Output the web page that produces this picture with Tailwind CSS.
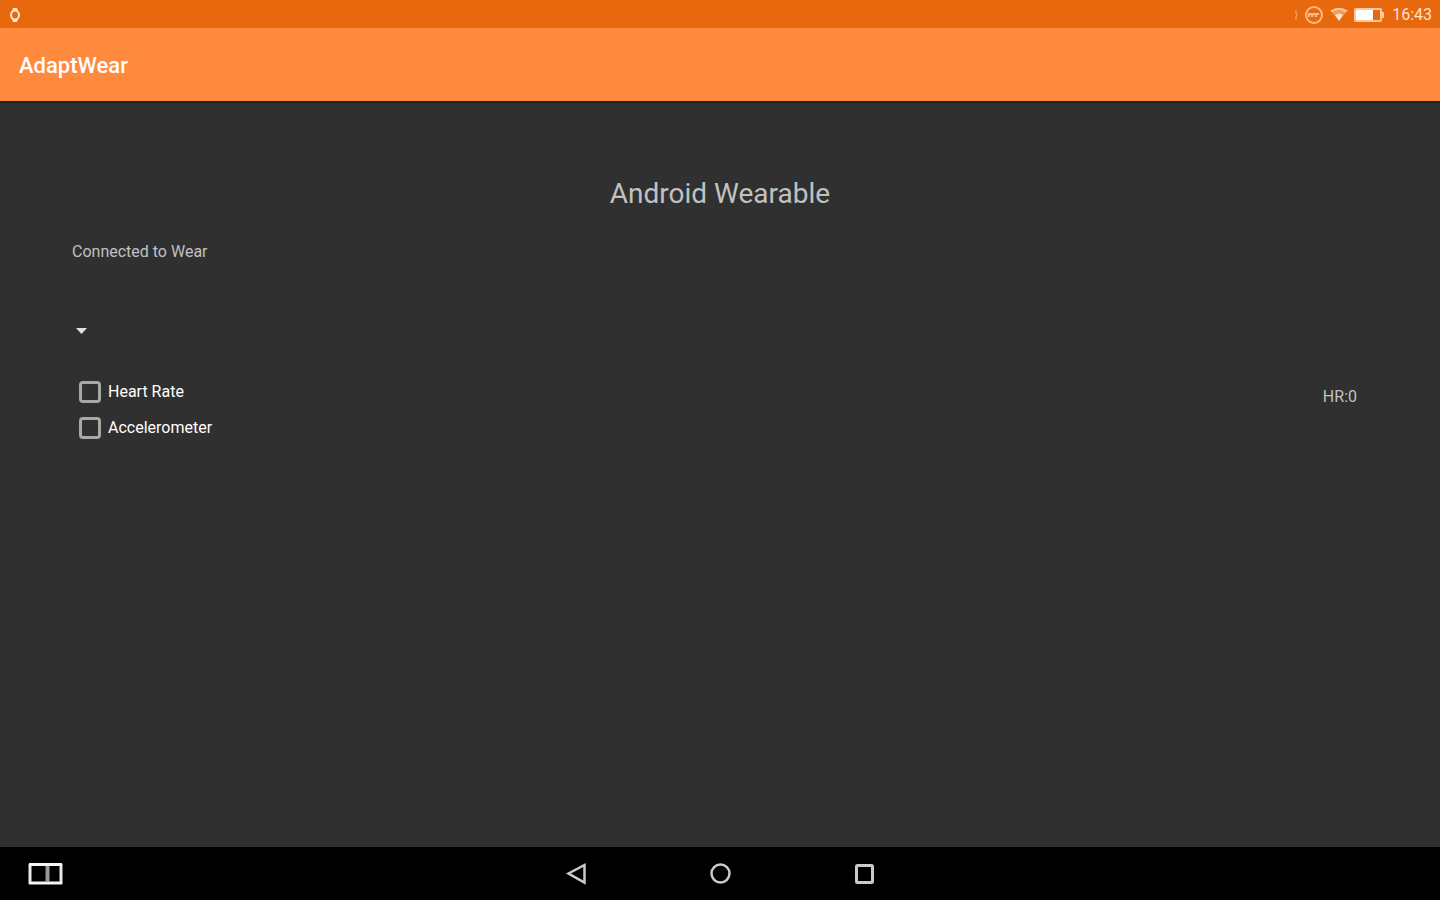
<!DOCTYPE html>
<html lang="en">
<head>
<meta charset="utf-8">
<meta name="viewport" content="width=device-width, initial-scale=1">
<title>AdaptWear</title>
<script src="https://cdn.jsdelivr.net/npm/@tailwindcss/browser@4"></script>
</head>
<body class="flex min-h-screen flex-col bg-[#303030] font-['Roboto',sans-serif] text-[#c1c1c1]">
  <!-- Status bar -->
  <div class="flex h-7 shrink-0 items-center justify-between bg-[#e8680e] pt-[2px] pr-2 pl-2 text-[#ffe3cc]">
    <svg class="h-4 w-3.5" viewBox="0 0 14 16" fill="none" aria-hidden="true">
      <path d="M5 1h4l1 3H4zM4 12h6l-1 3H5z" fill="currentColor"/>
      <ellipse cx="7" cy="8" rx="4" ry="4.500" stroke="currentColor" stroke-width="2"/>
    </svg>
    <div class="flex items-center">
      <svg class="mr-1.5 h-4 w-1" viewBox="0 0 4 16" fill="none" stroke="#f39a5c" stroke-width="1.5" aria-hidden="true"><path d="M2 3v3l1 2-1 2v3"/></svg>
      <svg class="mr-1.5 h-5 w-5" viewBox="0 0 20 20" fill="none" stroke="#ffb988" stroke-width="2" aria-hidden="true">
        <circle cx="10" cy="10" r="8"/>
        <path d="M5 12V9h3v3M8.500 11.500V9H12v2M12 12V9h3"/>
      </svg>
      <svg class="mr-1.5 h-4 w-[18px]" viewBox="0 0 18 16" fill="none" aria-hidden="true">
        <path d="M1 4Q9-1 17 4L9 14z" fill="#f39a5c"/>
        <path d="M1 4.500Q9-1 17 4.500" stroke="#ffc79c" stroke-width="2"/>
        <path d="M5 8Q9 5 13 8L9 14z" fill="#ffe3cc"/>
      </svg>
      <svg class="mr-2 h-4 w-[30px]" viewBox="0 0 30 16" fill="none" aria-hidden="true">
        <rect x="1" y="2" width="26" height="12" rx="1" stroke="#ffc79c" stroke-width="2"/>
        <path d="M2 3h17v10H2z" fill="#fff"/>
        <path d="M28 5h2v6h-2z" fill="#ffc79c"/>
      </svg>
      <time class="text-base leading-5">16:43</time>
    </div>
  </div>

  <!-- App bar -->
  <header class="flex h-[73px] shrink-0 items-center bg-[#ff8a3d] px-[19px] pt-[3px] text-white shadow-[0_2px_1px_#1d2227]">
    <h1 class="text-[22px] leading-7 font-medium">AdaptWear</h1>
  </header>

  <main class="flex grow flex-col px-[72px] pt-[73px]">
    <h2 class="text-center text-[28px] leading-10">Android Wearable</h2>
    <p class="mt-[26px] text-base leading-6">Connected to Wear</p>
    <div class="relative mt-[54px] h-6 w-[18px]">
      <select aria-label="Wearable device" class="h-6 w-full appearance-none bg-transparent outline-none"></select>
      <svg class="pointer-events-none absolute inset-0 h-6 w-[18px]" viewBox="0 0 18 24" aria-hidden="true"><path d="M4 10h11l-5.500 6z" fill="#e0e0e0"/></svg>
    </div>
    <div class="mt-8 flex items-start justify-between pr-[11px] pl-[7px]">
      <div class="text-base leading-6 text-white">
        <label class="flex h-9 items-center gap-[7px]">
          <input type="checkbox" class="h-[22px] w-[22px] appearance-none rounded-[4px] border-3 border-[#a8a8a8] checked:bg-[#ff8a3d]">
          Heart Rate
        </label>
        <label class="flex h-9 items-center gap-[7px]">
          <input type="checkbox" class="h-[22px] w-[22px] appearance-none rounded-[4px] border-3 border-[#a8a8a8] checked:bg-[#ff8a3d]">
          Accelerometer
        </label>
      </div>
      <output class="mt-[11px] text-base leading-6">HR:0</output>
    </div>
  </main>

  <!-- System navigation -->
  <nav aria-label="System" class="grid h-[53px] shrink-0 grid-cols-[1fr_auto_1fr] items-center bg-black text-[#cacaca]">
    <button type="button" aria-label="Split screen" class="ml-7 h-6 w-9">
      <svg class="h-6 w-9" viewBox="0 0 36 24" fill="none" aria-hidden="true">
        <path d="M2 2v20M33 2v20" stroke="#e8e8e8" stroke-width="3"/>
        <path d="M1 2.500h33M1 21h33" stroke="#f4f4f4" stroke-width="3"/>
        <path d="M19.500 4v16" stroke="#999" stroke-width="4"/>
      </svg>
    </button>
    <div class="flex gap-[120px]">
      <button type="button" aria-label="Back" class="h-6 w-6">
        <svg class="h-6 w-6" viewBox="0 0 24 24" fill="none" aria-hidden="true"><path d="M20.500 3v17.500L4.500 11.500z" stroke="currentColor" stroke-width="2.500"/></svg>
      </button>
      <button type="button" aria-label="Home" class="h-6 w-6">
        <svg class="h-6 w-6" viewBox="0 0 24 24" fill="none" aria-hidden="true"><circle cx="12.500" cy="11.500" r="9" stroke="currentColor" stroke-width="2.500"/></svg>
      </button>
      <button type="button" aria-label="Recent apps" class="h-6 w-6">
        <svg class="h-6 w-6" viewBox="0 0 24 24" fill="none" aria-hidden="true"><rect x="4.500" y="3.500" width="16" height="17" rx="1" stroke="currentColor" stroke-width="3"/></svg>
      </button>
    </div>
  </nav>
</body>
</html>
